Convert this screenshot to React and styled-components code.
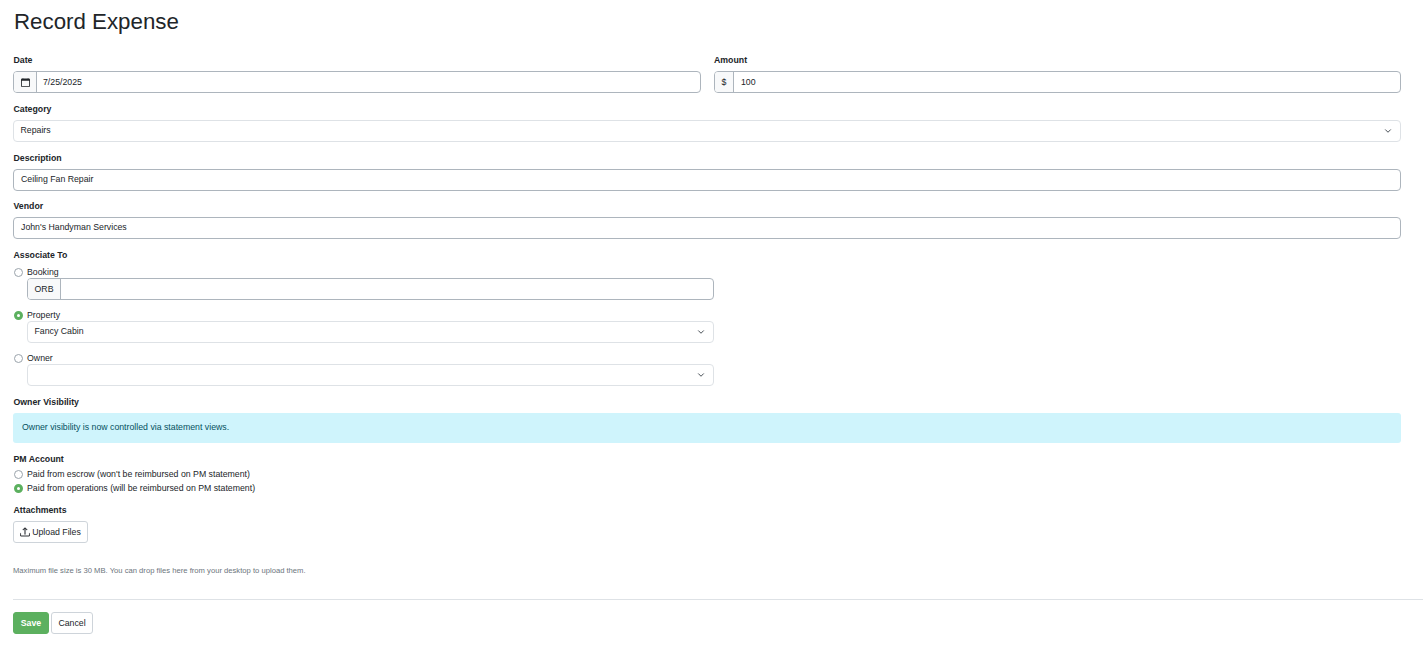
import React from 'react';
import styled, { createGlobalStyle } from 'styled-components';
import { ChevronDown } from 'lucide-react';

const GlobalStyle = createGlobalStyle`
    html, body {
        margin: 0;
        padding: 0;
        background: #fff;
    }
    body {
        font-family: "Liberation Sans", Arial, sans-serif;
        font-size: 8.75px;
        color: #212529;
    }
`;

const Page = styled.div`
    width: 1423px;
    height: 646px;
    overflow: hidden;
    box-sizing: border-box;
    padding-top: 9px;
`;

const Title = styled.h1`
    margin: 0 0 0 14px;
    font-size: 22.3px;
    line-height: 26px;
    font-weight: 400;
`;

const Form = styled.form`
    width: 1388px;
    margin: 20px 0 0 13px;
`;

const Row = styled.div`
    display: grid;
    grid-template-columns: 688px 687px;
    column-gap: 13px;
`;

const Field = styled.div`
    margin-bottom: ${props => props.$mb ?? 11}px;
`;

const Label = styled.div`
    font-size: 8.75px;
    line-height: 11px;
    font-weight: bold;
    margin-bottom: 5px;
    padding-left: ${props => props.$pl ?? 0.5}px;
`;

const InputGroup = styled.div`
    display: flex;
    height: 22px;
    box-sizing: border-box;
    border: 1px solid #adb5bd;
    border-radius: 4px;
    overflow: hidden;
`;

const Addon = styled.div`
    display: flex;
    align-items: center;
    justify-content: center;
    flex: none;
    width: ${props => props.$w}px;
    box-sizing: border-box;
    background: #f8f9fa;
    border-right: 1px solid #adb5bd;
`;

const Value = styled.div`
    display: flex;
    align-items: center;
    flex: 1;
    padding: 0 0 ${props => props.$pb ?? 3}px ${props => props.$pl ?? 7}px;
`;

const Select = styled.div`
    display: flex;
    align-items: center;
    justify-content: space-between;
    height: 22px;
    box-sizing: border-box;
    border: 1px solid #dee2e6;
    border-radius: 4px;
    padding: 0 7px 3px 6.5px;
`;

const SelectArrow = styled(ChevronDown)`
    margin-top: 3px;
`;

const Half = styled.div`
    width: 687px;
    margin-left: 14px;
`;

const RadioLine = styled.div`
    display: flex;
    align-items: flex-end;
    gap: 4px;
    height: ${props => props.$h}px;
    line-height: 11px;
    padding-left: 1px;
`;

const Radio = styled.span`
    flex: none;
    width: 9px;
    height: 9px;
    margin-bottom: 1px;
    box-sizing: border-box;
    border-radius: 50%;
    border: ${props => (props.$on ? '3px solid #5cb05f' : '1px solid #9aa3ab')};
    background: #fff;
`;

const Alert = styled.div`
    height: 30px;
    box-sizing: border-box;
    display: flex;
    align-items: center;
    padding: 0 0 3px 9px;
    background: #cff4fc;
    border-radius: 3px;
    color: #055160;
`;

const Button = styled.button`
    display: inline-flex;
    align-items: center;
    justify-content: center;
    gap: 2px;
    height: 22px;
    width: ${props => props.$w}px;
    padding: 0;
    box-sizing: border-box;
    font-family: inherit;
    font-size: 8.75px;
    border-radius: 3px;
    border: 1px solid ${props => (props.$primary ? '#5cb05f' : '#ced4da')};
    background: ${props => (props.$primary ? '#5cb05f' : '#fff')};
    color: ${props => (props.$primary ? '#fff' : '#212529')};
    font-weight: ${props => (props.$primary ? 'bold' : 'normal')};
`;

const Note = styled.div`
    margin-top: 23px;
    font-size: 7.65px;
    line-height: 10px;
    color: #6c757d;
`;

const Divider = styled.hr`
    width: 1410px;
    margin: 23px 0 12px;
    border: none;
    border-top: 1px solid #dee2e6;
`;

const Actions = styled.div`
    display: flex;
    gap: 2px;
`;

const CalendarIcon = () => (
    <svg width="9" height="9" viewBox="0 0 16 16" fill="#212529">
        <path d="M3.5 0a.5.5 0 0 1 .5.5V1h8V.5a.5.5 0 0 1 1 0V1h1a2 2 0 0 1 2 2v11a2 2 0 0 1-2 2H2a2 2 0 0 1-2-2V3a2 2 0 0 1 2-2h1V.5a.5.5 0 0 1 .5-.5zM1.5 5v9a.5.5 0 0 0 .5.5h12a.5.5 0 0 0 .5-.5V5h-13z" />
    </svg>
);

const UploadIcon = () => (
    <svg width="10" height="10" viewBox="0 0 16 16" fill="#212529" stroke="#212529" strokeWidth="0.5">
        <path d="M.5 9.9a.5.5 0 0 1 .5.5v2.5a1 1 0 0 0 1 1h12a1 1 0 0 0 1-1v-2.5a.5.5 0 0 1 1 0v2.5a2 2 0 0 1-2 2H2a2 2 0 0 1-2-2v-2.5a.5.5 0 0 1 .5-.5z" />
        <path d="M7.646 1.146a.5.5 0 0 1 .708 0l3 3a.5.5 0 0 1-.708.708L8.5 2.707V11.5a.5.5 0 0 1-1 0V2.707L5.354 4.854a.5.5 0 1 1-.708-.708l3-3z" />
    </svg>
);

const Chevron = () => <SelectArrow size={10} strokeWidth={2.4} color="#495057" />;

const App = () => (
    <Page>
        <GlobalStyle />
        <Title>Record Expense</Title>
        <Form>
            <Row>
                <Field>
                    <Label>Date</Label>
                    <InputGroup>
                        <Addon $w={23}><CalendarIcon /></Addon>
                        <Value $pl={6} $pb={1}>7/25/2025</Value>
                    </InputGroup>
                </Field>
                <Field>
                    <Label $pl={0}>Amount</Label>
                    <InputGroup>
                        <Addon $w={19}>$</Addon>
                        <Value $pb={1}>100</Value>
                    </InputGroup>
                </Field>
            </Row>
            <Field>
                <Label>Category</Label>
                <Select>Repairs<Chevron /></Select>
            </Field>
            <Field $mb={10}>
                <Label>Description</Label>
                <InputGroup><Value>Ceiling Fan Repair</Value></InputGroup>
            </Field>
            <Field>
                <Label>Vendor</Label>
                <InputGroup><Value>John's Handyman Services</Value></InputGroup>
            </Field>
            <Field>
                <Label>Associate To</Label>
                <RadioLine $h={12}><Radio />Booking</RadioLine>
                <Half>
                    <InputGroup>
                        <Addon $w={33}>ORB</Addon>
                        <Value />
                    </InputGroup>
                </Half>
                <RadioLine $h={21}><Radio $on />Property</RadioLine>
                <Half><Select>Fancy Cabin<Chevron /></Select></Half>
                <RadioLine $h={21}><Radio />Owner</RadioLine>
                <Half><Select><span /><Chevron /></Select></Half>
            </Field>
            <Field>
                <Label>Owner Visibility</Label>
                <Alert>Owner visibility is now controlled via statement views.</Alert>
            </Field>
            <Field>
                <Label>PM Account</Label>
                <RadioLine $h={10}><Radio />Paid from escrow (won't be reimbursed on PM statement)</RadioLine>
                <RadioLine $h={14}><Radio $on />Paid from operations (will be reimbursed on PM statement)</RadioLine>
            </Field>
            <Field $mb={0}>
                <Label>Attachments</Label>
                <Button type="button" $w={75}><UploadIcon />Upload Files</Button>
            </Field>
            <Note>Maximum file size is 30 MB. You can drop files here from your desktop to upload them.</Note>
            <Divider />
            <Actions>
                <Button type="button" $primary $w={36}>Save</Button>
                <Button type="button" $w={42}>Cancel</Button>
            </Actions>
        </Form>
    </Page>
);

export default App;
